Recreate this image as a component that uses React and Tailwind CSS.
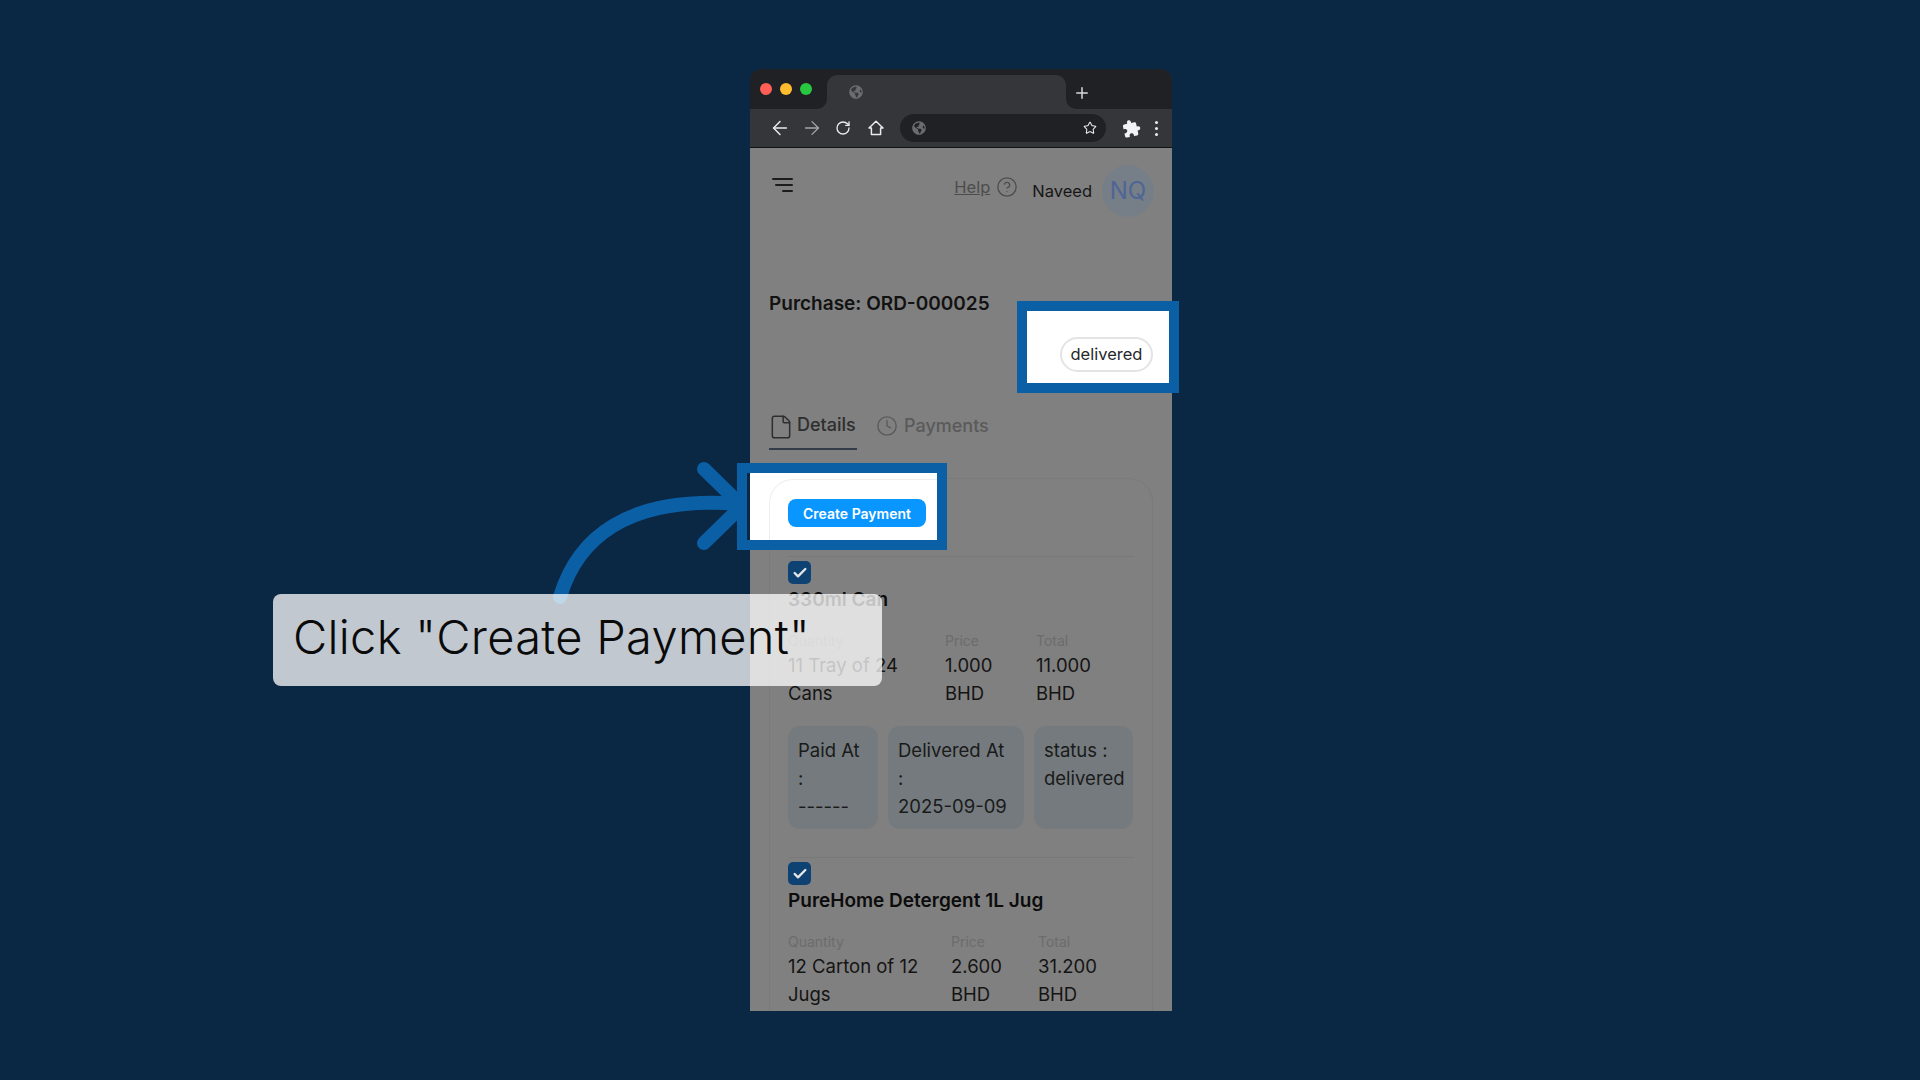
import React from 'react';
import { ArrowLeft, ArrowRight, RotateCw, Plus, Star, File, Clock, CircleHelp, Check } from 'lucide-react';
import { FaGlobeAmericas } from 'react-icons/fa';
import { MdExtension } from 'react-icons/md';

const items = [
  {
    name: '330ml Can',
    cols: 'grid-cols-[157px_91px_1fr]',
    quantity: '11 Tray of 24 Cans',
    price: '1.000 BHD',
    total: '11.000 BHD',
    tiles: true,
  },
  {
    name: 'PureHome Detergent 1L Jug',
    cols: 'grid-cols-[163px_87px_1fr]',
    quantity: '12 Carton of 12 Jugs',
    price: '2.600 BHD',
    total: '31.200 BHD',
  },
];

function BrowserChrome() {
  return (
    <>
      <div className="flex h-[40px] shrink-0 bg-[#35363a]">
        <div className="flex h-full w-[77px] items-center gap-[8px] rounded-br-[10px] bg-[#202124] pl-[10px]">
          <span className="h-[12px] w-[12px] rounded-full bg-[#ff5f57]" />
          <span className="h-[12px] w-[12px] rounded-full bg-[#febc2e]" />
          <span className="h-[12px] w-[12px] rounded-full bg-[#28c840]" />
        </div>
        <div className="w-[239px] bg-[#202124] pt-[6px]">
          <div className="flex h-full items-center rounded-t-[10px] bg-[#35363a] pl-[22px]">
            <FaGlobeAmericas size={14} className="text-[#6b6c70]" />
          </div>
        </div>
        <div className="flex flex-1 items-center rounded-bl-[10px] bg-[#202124] pl-[7px] pt-[8px]">
          <Plus size={18} strokeWidth={2} className="text-[#d8d9da]" />
        </div>
      </div>
      <div className="flex h-[39px] shrink-0 items-center border-b border-[#111214] bg-[#35363a] pl-[14px]">
        <div className="flex w-[32px] justify-center"><ArrowLeft size={22} strokeWidth={1.6} className="text-[#e8eaed]" /></div>
        <div className="flex w-[32px] justify-center"><ArrowRight size={22} strokeWidth={1.4} className="text-[#a5a7aa]" /></div>
        <div className="-ml-px flex w-[32px] justify-center"><RotateCw size={16} strokeWidth={2} className="text-[#e8eaed]" /></div>
        <div className="ml-px flex w-[32px] justify-center">
          <svg width="16" height="16" viewBox="0 0 16 16" fill="none" stroke="#e8eaed" strokeWidth="1.5" strokeLinejoin="round">
            <path d="M1 8 L8 1.2 L15 8 H12.6 V14.6 H3.4 V8 Z" />
          </svg>
        </div>
        <div className="ml-[8px] flex h-[28px] w-[206px] items-center justify-between rounded-full bg-[#202124] pl-[12px] pr-[9px]">
          <FaGlobeAmericas size={14} className="text-[#6b6c70]" />
          <Star size={14} strokeWidth={1.8} className="text-[#e8eaed]" />
        </div>
        <div className="ml-[13px] flex w-[24px] justify-center"><MdExtension size={19} className="-rotate-12 text-[#f1f3f4]" /></div>
        <div className="ml-px flex w-[24px] flex-col items-center gap-[3px]">
          <span className="h-[3px] w-[3px] rounded-full bg-[#e8eaed]" />
          <span className="h-[3px] w-[3px] rounded-full bg-[#e8eaed]" />
          <span className="h-[3px] w-[3px] rounded-full bg-[#e8eaed]" />
        </div>
      </div>
    </>
  );
}

function OrderItem({ item }) {
  return (
    <div className="border-t border-[#787878] pt-[4px]">
      <div className="flex h-[23px] w-[23px] items-center justify-center rounded-[5px] bg-[#0d4273]">
        <Check size={16} strokeWidth={3.5} className="text-[#e6e6e6]" />
      </div>
      <h3 className="mt-[2px] text-[19px] leading-[28px] font-semibold text-[#0c0c0c]">{item.name}</h3>
      <div className={`mt-[17px] grid ${item.cols}`}>
        <div className="pr-[10px]">
          <p className="text-[14px] leading-[20px] text-[#6c6c6c]">Quantity</p>
          <p className="text-[18.5px] leading-[28px] text-[#141414]">{item.quantity}</p>
        </div>
        <div className="pr-[10px]">
          <p className="text-[14px] leading-[20px] text-[#6c6c6c]">Price</p>
          <p className="text-[18.5px] leading-[28px] text-[#141414]">{item.price}</p>
        </div>
        <div className="pr-[20px]">
          <p className="text-[14px] leading-[20px] text-[#6c6c6c]">Total</p>
          <p className="text-[18.5px] leading-[28px] text-[#141414]">{item.total}</p>
        </div>
      </div>
      {item.tiles && (
        <div className="mb-[28px] mt-[19px] flex gap-[10px] text-[18.5px] leading-[28px] text-[#1a1a1a]">
          <div className="h-[103px] w-[90px] rounded-[12px] bg-[#747a7e] px-[10px] pt-[10px]">
            <p>Paid At</p>
            <p>:</p>
            <p>------</p>
          </div>
          <div className="h-[103px] w-[136px] rounded-[12px] bg-[#747a7e] px-[10px] pt-[10px]">
            <p>Delivered At</p>
            <p>:</p>
            <p>2025-09-09</p>
          </div>
          <div className="h-[103px] w-[99px] rounded-[12px] bg-[#747a7e] px-[10px] pt-[10px]">
            <p>status : delivered</p>
          </div>
        </div>
      )}
    </div>
  );
}

function PurchasePage() {
  return (
    <div className="flex min-h-0 flex-1 flex-col overflow-hidden bg-[#808080] px-[19px] pt-[17px] font-['Inter',sans-serif]">
      <div className="flex h-[52px] shrink-0 items-start">
        <div className="ml-[3px] mt-[13px] flex w-[21px] flex-col items-end gap-[4px]">
          <span className="h-[2px] w-full rounded-full bg-[#1c1c1c]" />
          <span className="h-[2px] w-[18px] rounded-full bg-[#1c1c1c]" />
          <span className="h-[2px] w-[11px] rounded-full bg-[#1c1c1c]" />
        </div>
        <a className="ml-auto mt-[10px] flex items-center gap-[6px] text-[16.5px] leading-[24px] text-[#4c4c4c]">
          <span className="underline">Help</span>
          <CircleHelp size={22} strokeWidth={1.4} />
        </a>
        <span className="ml-[14px] mt-[14px] text-[16.5px] leading-[24px] text-[#161616]">Naveed</span>
        <div className="-mr-px ml-[10px] flex h-[52px] w-[52px] items-center justify-center rounded-full bg-[#767e88] text-[24px] text-[#4f6595]">
          NQ
        </div>
      </div>
      <h1 className="mt-[73px] shrink-0 text-[19px] leading-[28px] font-semibold text-[#121212]">Purchase: ORD-000025</h1>
      <div className="mt-[95px] flex shrink-0 text-[18px] leading-[24px]">
        <div className="flex h-[37px] w-[88px] items-start gap-[3px] border-b-2 border-[#333c48] text-[#2e2e2e]">
          <File size={26} strokeWidth={1.4} className="-ml-px mt-px" />
          <span className="font-medium">Details</span>
        </div>
        <div className="ml-[19px] flex items-start gap-[6px] text-[#5a5a5a]">
          <Clock size={22} strokeWidth={1.5} className="mt-[2px]" />
          <span className="mt-px font-medium">Payments</span>
        </div>
      </div>
      <div className="mt-[28px] flex-1 rounded-t-[24px] border border-b-0 border-[#7a7a7a] px-[18px] pt-[77px]">
        {items.map((item) => (
          <OrderItem key={item.name} item={item} />
        ))}
      </div>
    </div>
  );
}

export default function App() {
  return (
    <div className="relative h-screen w-full overflow-hidden bg-[#0a2744] pt-[69px]">
      <div className="ml-[750px] flex h-[942px] w-[422px] flex-col overflow-hidden rounded-t-[12px]">
        <BrowserChrome />
        <PurchasePage />
      </div>

      {/* status spotlight */}
      <div className="absolute left-[1017px] top-[301px] flex h-[92px] w-[162px] border-[10px] border-[#0b5fa5] bg-white font-['Inter',sans-serif]">
        <div className="flex w-full items-end justify-end pb-[11px] pr-[16px]">
          <span className="flex h-[35px] w-[93px] items-center justify-center rounded-full border-2 border-[#e4e4e7] text-[16.5px] text-[#27272a]">
            delivered
          </span>
        </div>
      </div>

      {/* create payment spotlight */}
      <div className="absolute left-[737px] top-[463px] flex h-[87px] w-[210px] border-[10px] border-[#0b5fa5] pl-[3px] font-['Inter',sans-serif]">
        <div className="flex-1 overflow-hidden bg-white pl-[19px] pt-[6px]">
          <div className="h-full rounded-tl-[24px] border-l border-t border-[#eeeeee] pl-[18px] pt-[19px]">
            <button className="flex h-[28px] w-[138px] items-center justify-center rounded-[8px] bg-[#0a96ff] text-[14px] font-semibold text-white">
              Create Payment
            </button>
          </div>
        </div>
      </div>

      {/* arrow */}
      <svg className="absolute left-[545px] top-[455px]" width="200" height="150" viewBox="0 0 200 150" fill="none" stroke="#0b5fa5" strokeWidth="14" strokeLinecap="round" strokeLinejoin="round">
        <path d="M15 142 C32 85 80 40 195 49" />
        <path d="M159 14 L197 51 L159 88" />
      </svg>

      {/* caption */}
      <div className="absolute left-[273px] top-[594px] flex h-[92px] w-[609px] items-center rounded-[8px] bg-white/75 pb-[6px] pl-[20px] font-['Inter',sans-serif] text-[47px] font-light tracking-[0.3px] text-[#0a0a0a]">
        Click "Create Payment"
      </div>
    </div>
  );
}
